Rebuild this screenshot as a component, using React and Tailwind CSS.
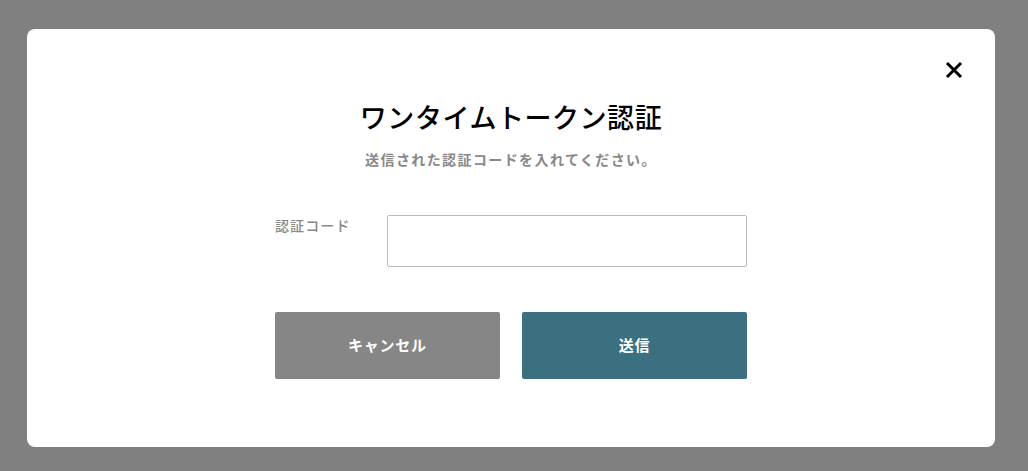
import React from 'react';

export default function App() {
  return (
    <div
      className="min-h-[471px] w-full bg-[#808080] pl-[27px] pt-[29px]"
      style={{ fontFamily: '"Noto Sans CJK JP", "Noto Sans", sans-serif' }}
    >
      {/* Modal */}
      <div className="relative w-[968px] h-[418px] rounded-lg bg-white pt-[68px] flex flex-col items-center">
        <button className="absolute right-[32px] top-[32px] w-[18px] h-[18px]" aria-label="close">
          <svg viewBox="0 0 18 18" className="w-[18px] h-[18px]">
            <path d="M2 2 L16 16 M16 2 L2 16" stroke="#000" strokeWidth="3" strokeLinecap="butt" />
          </svg>
        </button>

        <h1 className="text-[27px] leading-[40px] font-medium text-black tracking-[0.02em]">
          ワンタイムトークン認証
        </h1>
        <p className="mt-[12px] text-[14px] leading-[20px] font-bold text-[#888] tracking-[0.1em]">
          送信された認証コードを入れてください。
        </p>

        <div className="mt-[46px] w-[472px] flex">
          <label className="w-[112px] text-[14px] leading-[20px] font-medium text-[#888] tracking-[0.08em]">
            認証コード
          </label>
          <input
            type="text"
            className="w-[360px] h-[52px] rounded-[2px] border border-[#bbb] px-3 outline-none"
          />
        </div>

        <div className="mt-[45px] w-[472px] flex gap-[22px]">
          <button className="w-[225px] h-[67px] rounded-[2px] bg-[#868686] text-white text-[15px] font-bold tracking-[0.05em]">
            キャンセル
          </button>
          <button className="w-[225px] h-[67px] rounded-[2px] bg-[#3a7080] text-white text-[15px] font-bold tracking-[0.05em]">
            送信
          </button>
        </div>
      </div>
    </div>
  );
}
